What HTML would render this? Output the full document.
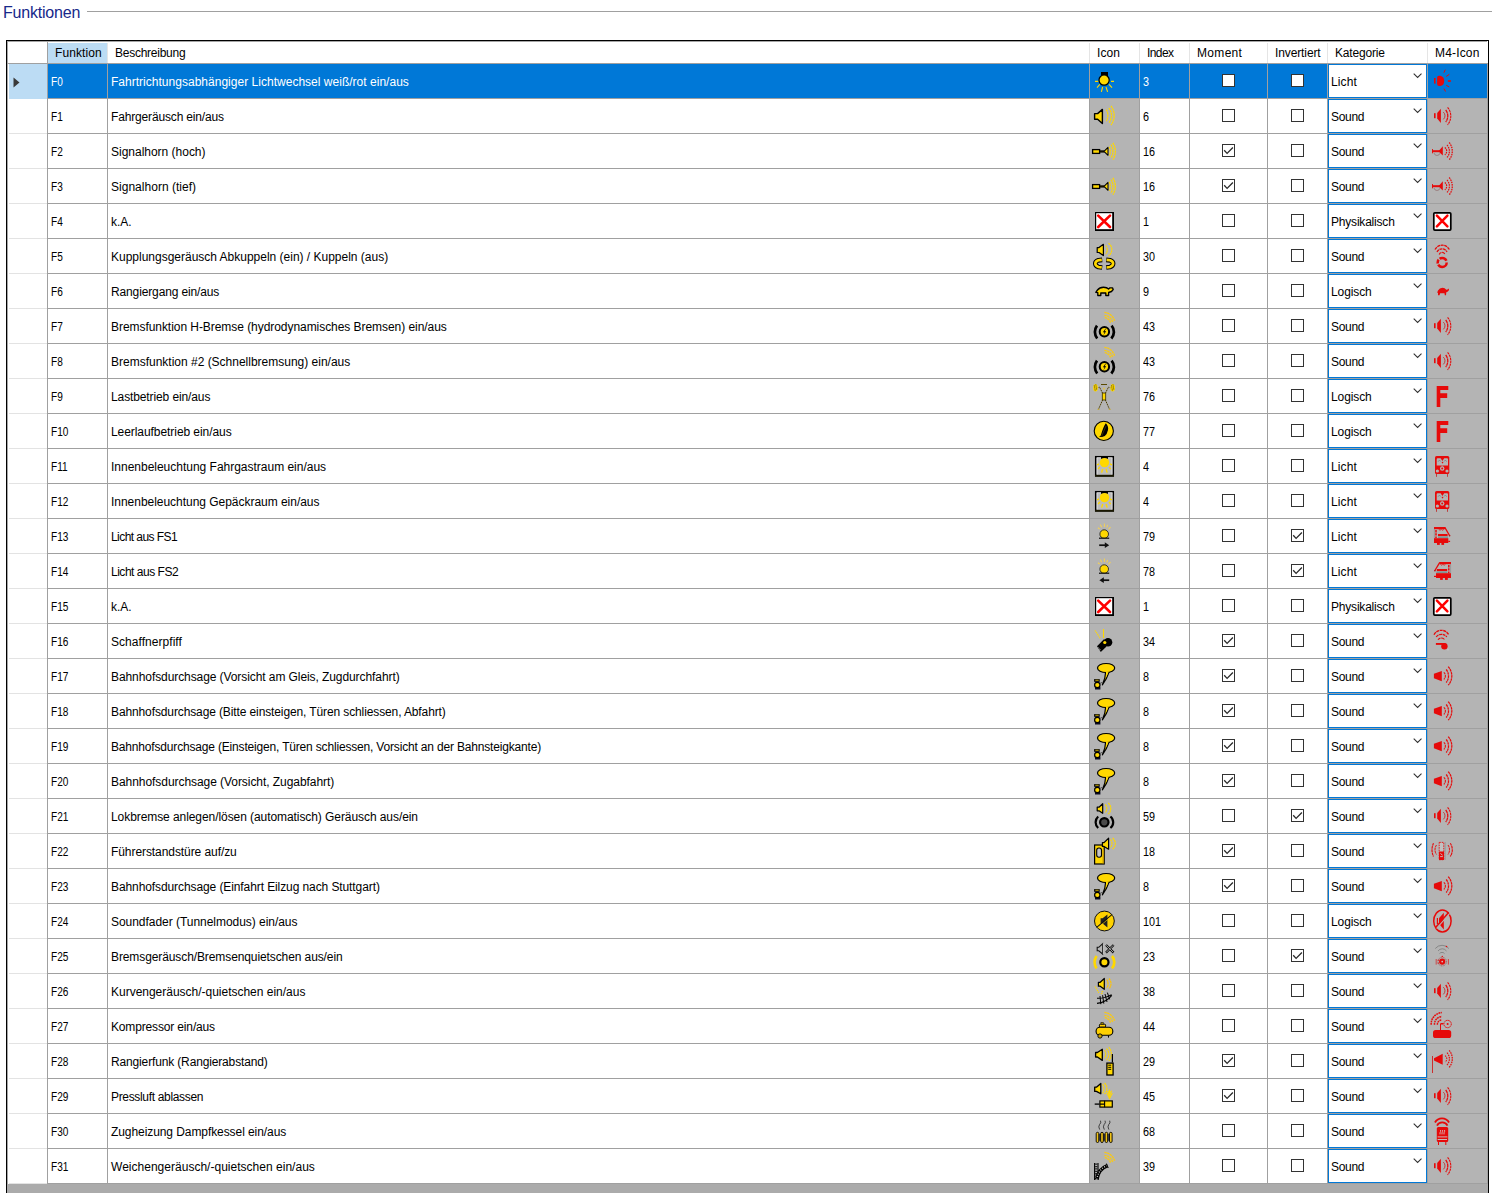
<!DOCTYPE html><html><head><meta charset="utf-8"><title>Funktionen</title><style>
html,body{margin:0;padding:0;background:#fff;}
body{width:1492px;height:1193px;position:relative;overflow:hidden;font-family:"Liberation Sans",sans-serif;font-size:12px;color:#000;}
.a{position:absolute;}
.t{position:absolute;white-space:nowrap;line-height:14px;height:14px;}
#title{left:3px;top:4px;font-size:16px;line-height:18px;height:18px;color:#17288a;white-space:nowrap;}
#tline{left:87px;top:11px;width:1405px;height:1px;background:#a0a0a0;}
#grid{left:6px;top:40px;width:1481px;height:1160px;border:1px solid #000;background:#ababab;}
#body{left:7px;top:41px;width:1481px;height:1143px;background:#fff;}
.hl{position:absolute;height:1px;background:#a0a0a0;left:47px;width:1441px;}
.rl{position:absolute;height:1px;background:#e3e3e3;left:9px;width:38px;}
.vl{position:absolute;width:1px;background:#a0a0a0;top:64px;height:1120px;}
.hv{position:absolute;width:1px;background:#e5e5e5;top:43px;height:20px;}
.g{position:absolute;background:#b4b4b4;height:34px;}
.sel{position:absolute;background:#0078d7;height:34px;top:64px;}
.cb{position:absolute;width:11px;height:11px;border:1px solid #333;background:#fff;}
.cb svg{position:absolute;left:-1px;top:-1px;}
.co{position:absolute;left:1328px;width:97px;height:32px;border:1px solid #0078d7;background:#fff;}
.ic{position:absolute;width:48px;height:34px;overflow:visible;}
.w{color:#fff;}
.n{transform:scaleX(.84);transform-origin:0 0;}
.m{transform:scaleX(.9);transform-origin:0 0;}
</style></head><body>
<svg width="0" height="0" style="position:absolute"><defs><symbol id="sun" viewBox="0 0 48 34" overflow="visible"><rect x="11" y="8" width="7" height="4" fill="#000"/><circle cx="14.1" cy="16.1" r="5.1" fill="#ffd800" stroke="#000" stroke-width="1.2"/><path d="M5 17.4H8.2M21 17.4H24M9.8 20.4L7 23.6M19 20.4L22 23.6M12.6 23L11.4 27.9M16 23L17.6 27.9" fill="none" stroke="#ffd800" stroke-width="1.1" /></symbol><symbol id="speaker" viewBox="0 0 48 34" overflow="visible"><path d="M4.6 14.6L7.6 14.6L12.4 10.4L12.4 24.6L7.6 20.2L4.6 20.2Z" fill="#ffd800" stroke="#000" stroke-width="1.4" stroke-linejoin="round"/><path d="M16.30 10.70A10.95 10.95 0 0 1 16.30 22.10" fill="none" stroke="#ffd800" stroke-width="1.25" stroke-dasharray="2.2 0.5"/><path d="M18.80 9.00A11.77 11.77 0 0 1 18.80 24.00" fill="none" stroke="#ffd800" stroke-width="1.25" stroke-dasharray="2.2 0.5"/><path d="M21.00 7.00A15.70 15.70 0 0 1 21.00 26.00" fill="none" stroke="#ffd800" stroke-width="1.25" stroke-dasharray="2.2 0.5"/></symbol><symbol id="horn" viewBox="0 0 48 34" overflow="visible"><rect x="2.6" y="15.6" width="7" height="3.8" fill="#ffd800" stroke="#000" stroke-width="1.3"/><rect x="10" y="16.3" width="4.6" height="2.3" fill="#141000"/><path d="M14 17.3L18 13.3L18 21.3Z" fill="#ffd800" stroke="#000" stroke-width="1.05" stroke-linejoin="round"/><path d="M19.20 12.80A9.35 9.35 0 0 1 19.20 21.60" fill="none" stroke="#ffd800" stroke-width="1.25" stroke-dasharray="2.2 0.5"/><path d="M21.00 10.60A12.76 12.76 0 0 1 21.00 24.00" fill="none" stroke="#ffd800" stroke-width="1.25" stroke-dasharray="2.2 0.5"/><path d="M22.90 8.90A15.36 15.36 0 0 1 22.90 25.70" fill="none" stroke="#ffd800" stroke-width="1.25" stroke-dasharray="2.2 0.5"/></symbol><symbol id="x" viewBox="0 0 48 34" overflow="visible"><rect x="5" y="8" width="19" height="19" fill="#000"/><rect x="6.2" y="9.2" width="16" height="16" fill="#fff"/><path d="M8.2 11.6L20 23M20 11.6L8.2 23" fill="none" stroke="#ff0000" stroke-width="2.6" stroke-linecap="round"/></symbol><symbol id="couple" viewBox="0 0 48 34" overflow="visible"><path d="M7.2 8.6L9 8.6L13.4 5.3L13.4 16.6L9 13.5L7.2 13.5Z" fill="#ffd800" stroke="#000" stroke-width="1.2" stroke-linejoin="round"/><path d="M15.80 6.50A6.77 6.77 0 0 1 15.80 15.00" fill="none" stroke="#ffd800" stroke-width="1.15" stroke-dasharray="2.2 0.5"/><path d="M18.50 4.30A7.76 7.76 0 0 1 18.50 17.00" fill="none" stroke="#ffd800" stroke-width="1.15" stroke-dasharray="2.2 0.5"/><path d="M12.2 20.9L8.4 21.3Q5.3 22.4 5.3 24.6Q5.3 26.9 8.4 28L12.2 28.5" fill="none" stroke="#000" stroke-width="4.7" stroke-linejoin="round"/><path d="M11.8 20.9L8.4 21.3Q5.3 22.4 5.3 24.6Q5.3 26.9 8.4 28L11.8 28.5" fill="none" stroke="#ffd800" stroke-width="2.6" /><path d="M16.2 20.9L20 21.3Q23.1 22.4 23.1 24.6Q23.1 26.9 20 28L16.2 28.5" fill="none" stroke="#000" stroke-width="4.7" stroke-linejoin="round"/><path d="M16.6 20.9L20 21.3Q23.1 22.4 23.1 24.6Q23.1 26.9 20 28L16.6 28.5" fill="none" stroke="#ffd800" stroke-width="2.6" /></symbol><symbol id="turtle" viewBox="0 0 48 34" overflow="visible"><path d="M5.8 18.3L7.5 16Q9.5 13.2 13.5 13.2Q17 13.2 18.6 15L20 13.8L22.5 13.8L23.2 15.5L21.5 17.5L18.6 18.5L18.6 21.5L15.8 21.5L15.8 19L10.8 19L10.8 21.5L7.8 21.5L7.8 18.6Z" fill="#ffd800" stroke="#000" stroke-width="1.35" stroke-linejoin="round"/></symbol><symbol id="brake" viewBox="0 0 48 34" overflow="visible"><path d="M14.40 3.40A11.46 11.46 0 0 1 24.60 11.90" fill="none" stroke="#f9c916" stroke-width="1.3499999999999999" stroke-dasharray="2.4 0.5"/><path d="M14.40 6.30A9.36 9.36 0 0 1 22.60 13.00" fill="none" stroke="#f9c916" stroke-width="1.3499999999999999" stroke-dasharray="2.4 0.5"/><path d="M14.70 8.70A6.41 6.41 0 0 1 20.50 13.70" fill="none" stroke="#f9c916" stroke-width="1.3499999999999999" stroke-dasharray="2.4 0.5"/><path d="M7.00 16.60A10.56 10.56 0 0 0 7.20 29.50" fill="none" stroke="#000" stroke-width="2.7" /><path d="M21.60 16.60A9.72 9.72 0 0 1 21.30 29.50" fill="none" stroke="#000" stroke-width="2.7" /><circle cx="14.4" cy="22.8" r="4.7" fill="#ffd800" stroke="#000" stroke-width="2"/><path d="M15.3 19.8L12.9 23.3L14.5 23.3L13.4 26.2L16.2 22.2L14.6 22.2L15.9 19.8Z" fill="#000" /></symbol><symbol id="mast" viewBox="0 0 48 34" overflow="visible"><path d="M11 5.5H17" fill="none" stroke="#5a4a00" stroke-width="1" /><circle cx="14" cy="9.6" r="1.2" fill="#d8c060"/><rect x="12.3" y="14" width="3.4" height="7" fill="#ffd800" stroke="#3a3000" stroke-width="0.8"/><path d="M12.5 14L9.6 8.2L7.5 8.8M15.5 14L18.4 8.2L20.5 8.8M12.6 21L8.6 30M15.4 21L19.4 30" fill="none" stroke="#4a3c00" stroke-width="1" stroke-dasharray="1.4 0.6"/><ellipse cx="5.5" cy="8.8" rx="2.3" ry="3.8" fill="#ffd800"/><ellipse cx="22.7" cy="8.8" rx="2.3" ry="3.8" fill="#ffd800"/><path d="M4.3 6.5L5.2 11.5M5.8 5.5L6.7 11M21.5 6.5L22.4 11.5M23 5.5L23.9 11" fill="none" stroke="#000" stroke-width="0.7" stroke-dasharray="1 1"/><path d="M7.6 30.3H9.4M18.8 30.3H20.6" fill="none" stroke="#c8a820" stroke-width="1" /></symbol><symbol id="gauge" viewBox="0 0 48 34" overflow="visible"><circle cx="13.8" cy="16.9" r="9.6" fill="#ffd800" stroke="#000" stroke-width="1.1"/><path d="M15.8 9.3Q18.8 12.5 18 16Q17.2 20 14.8 22L12 23L9 22.8L10.8 21.5Q12 17 13.5 13.5Q14.5 11 15.8 9.3Z" fill="#000" /><path d="M11.5 22.3L16 12" fill="none" stroke="#7a6800" stroke-width="0.5" /></symbol><symbol id="interior" viewBox="0 0 48 34" overflow="visible"><rect x="5.7" y="7.7" width="17.6" height="19.2" fill="#bcbcbc" stroke="#000" stroke-width="1.5"/><rect x="5" y="25.8" width="19" height="1.8" fill="#1a1800"/><path d="M7.2 9V25.4M21.9 9V25.4M6.8 8.8H11M18 8.8H22.4" fill="none" stroke="#dcdcdc" stroke-width="0.9" /><rect x="11" y="7" width="7" height="2.8" fill="#000"/><circle cx="14.5" cy="13.6" r="4.7" fill="#ffd800"/><path d="M7 15.8L9 15M22 15.8L20 15M8.2 20.2L9.8 17.8M20.6 20.2L19 17.8M11.6 23.6L12.7 20M17.2 23.6L16 20" fill="none" stroke="#ffd800" stroke-width="1.4" /></symbol><symbol id="lampR" viewBox="0 0 48 34" overflow="visible"><path d="M7.9 8.8L9.7 10M10.3 5.6L11.7 8.2M14.4 4.4V7.9M17.6 5.9L16.7 8.5M20.5 8.2L18.5 10.3" fill="none" stroke="#f0cf5a" stroke-width="1.1" /><circle cx="14.2" cy="15.1" r="4.3" fill="#ffd800" stroke="#222" stroke-width="0.9"/><rect x="9" y="18.6" width="10.2" height="1.3" fill="#111"/><rect x="9.6" y="19.9" width="9" height="1" fill="#b4b4b4"/><path d="M9.2 26.2H16" fill="none" stroke="#111" stroke-width="1.7" /><path d="M14.8 23.3L19.2 26.2L14.8 29.1Z" fill="#111" /></symbol><symbol id="lampL" viewBox="0 0 48 34" overflow="visible"><path d="M7.9 8.8L9.7 10M10.3 5.6L11.7 8.2M14.4 4.4V7.9M17.6 5.9L16.7 8.5M20.5 8.2L18.5 10.3" fill="none" stroke="#f0cf5a" stroke-width="1.1" /><circle cx="14.2" cy="15.1" r="4.3" fill="#ffd800" stroke="#222" stroke-width="0.9"/><rect x="9" y="18.6" width="10.2" height="1.3" fill="#111"/><rect x="9.6" y="19.9" width="9" height="1" fill="#b4b4b4"/><path d="M12.5 26.2H19.2" fill="none" stroke="#111" stroke-width="1.7" /><path d="M13.8 23.3L9.4 26.2L13.8 29.1Z" fill="#111" /></symbol><symbol id="whistle" viewBox="0 0 48 34" overflow="visible"><path d="M13.5 5V14" fill="none" stroke="#ffd800" stroke-width="1.1" /><path d="M5 6.5L10.5 14.6" fill="none" stroke="#ffd800" stroke-width="1.2" stroke-dasharray="1.2 0.8"/><circle cx="18" cy="18.2" r="4.3" fill="#000"/><path d="M14.2 15L7 22.2L10.8 27.9L16.5 22.5Z" fill="#000" /><circle cx="14.8" cy="18.5" r="1.6" fill="#ffd800"/><path d="M8.6 23.6L10.8 26.6" fill="none" stroke="#ddd" stroke-width="0.9" stroke-dasharray="1 0.8"/></symbol><symbol id="announce" viewBox="0 0 48 34" overflow="visible"><path d="M15.6 13.2L19.2 12.8Q16.5 20.6 12.4 25.8Q15.5 19 15.6 13.2Z" fill="#ffd800" stroke="#000" stroke-width="1.2" stroke-linejoin="round"/><ellipse cx="16.1" cy="9" rx="8.6" ry="4.5" fill="#ffd800" stroke="#000" stroke-width="1.2"/><path d="M16 12.8L18.8 12.6L16 18.5Z" fill="#ffd800" /><rect x="4.1" y="20.1" width="5.6" height="2.7" fill="#000"/><rect x="5.3" y="20.8" width="3.4" height="0.8" fill="#ffd800"/><rect x="5.4" y="22.6" width="3.8" height="1.6" fill="#111"/><rect x="5" y="28" width="5.4" height="2.5" fill="#0a0a20"/><circle cx="7.3" cy="26" r="2.7" fill="#ffd800" stroke="#000" stroke-width="1.2"/><path d="M10.2 24.2L12.2 23.4" fill="none" stroke="#444" stroke-width="0.9" /></symbol><symbol id="brake2" viewBox="0 0 48 34" overflow="visible"><path d="M7.2 8.2L9 8.2L12.7 4.7L12.7 14.3L9 11.8L7.2 11.8Z" fill="#ffd800" stroke="#000" stroke-width="1.2" stroke-linejoin="round"/><path d="M15.30 5.50A6.08 6.08 0 0 1 15.30 13.50" fill="none" stroke="#ffd800" stroke-width="1.15" stroke-dasharray="2.2 0.5"/><path d="M18.20 4.00A7.12 7.12 0 0 1 18.20 15.00" fill="none" stroke="#ffd800" stroke-width="1.15" stroke-dasharray="2.2 0.5"/><path d="M8.20 17.50A7.66 7.66 0 0 0 8.20 29.00" fill="none" stroke="#000" stroke-width="2.2" /><path d="M20.40 17.50A7.30 7.30 0 0 1 20.40 29.00" fill="none" stroke="#000" stroke-width="2.2" /><circle cx="14.3" cy="23.3" r="4.2" fill="#4a4a4a" stroke="#000" stroke-width="2.2"/></symbol><symbol id="door" viewBox="0 0 48 34" overflow="visible"><rect x="4.6" y="11" width="9.6" height="19" fill="#ffd800" stroke="#000" stroke-width="1.2"/><rect x="12.6" y="15.5" width="1.2" height="14" fill="#c89a00"/><rect x="6.7" y="14" width="4.8" height="9.2" rx="2.2" fill="#c4c4c4" stroke="#000" stroke-width="1.1"/><path d="M12.4 8.6L14 8.6L18.6 4.2L18.6 15.2L14 12.4L12.4 12.4Z" fill="#ffd800" stroke="#000" stroke-width="1.2" stroke-linejoin="round"/><path d="M20.30 5.50A5.56 5.56 0 0 1 20.30 13.50" fill="none" stroke="#ffd800" stroke-width="1.15" stroke-dasharray="2.2 0.5"/><path d="M22.60 4.00A6.95 6.95 0 0 1 22.60 15.00" fill="none" stroke="#ffd800" stroke-width="1.15" stroke-dasharray="2.2 0.5"/></symbol><symbol id="fader" viewBox="0 0 48 34" overflow="visible"><circle cx="14.4" cy="17" r="9.9" fill="#ffd200" stroke="#111" stroke-width="1"/><path d="M10.6 14.2H12.6L17.4 10.6V23.4L12.6 19.6H10.6Z" fill="#222" /><path d="M6.7 23.4L22 10.6" fill="none" stroke="#111" stroke-width="1.2" /><path d="M7.6 24L22.6 11.4" fill="none" stroke="#ffd200" stroke-width="0.6" /></symbol><symbol id="brakesq" viewBox="0 0 48 34" overflow="visible"><path d="M7.2 8.3H8.8L12.6 4.8V15L8.8 11.8H7.2Z" fill="none" stroke="#111" stroke-width="1.1" /><path d="M13.3 4.5V15" fill="none" stroke="#d0d0d0" stroke-width="0.8" /><path d="M16 6L23.6 13.6M23.6 6L16 13.6" fill="none" stroke="#111" stroke-width="2.3" /><path d="M16.3 6.3L23.3 13.3M23.3 6.3L16.3 13.3" fill="none" stroke="#c0c0c0" stroke-width="0.8" /><path d="M6.60 17.00A10.61 10.61 0 0 0 6.60 29.40" fill="none" stroke="#ffd800" stroke-width="2.7" /><path d="M22.00 17.00A9.50 9.50 0 0 1 22.00 29.40" fill="none" stroke="#ffd800" stroke-width="2.7" /><circle cx="14.4" cy="23.2" r="4.1" fill="#ffd800" stroke="#000" stroke-width="2.2"/></symbol><symbol id="curve" viewBox="0 0 48 34" overflow="visible"><path d="M8.4 8.3L10.2 8.3L14.3 4.5L14.3 15.3L10.2 12.2L8.4 12.2Z" fill="#ffd800" stroke="#000" stroke-width="1.2" stroke-linejoin="round"/><path d="M16.80 5.50A8.10 8.10 0 0 1 16.80 14.00" fill="none" stroke="#ffc400" stroke-width="1.15" stroke-dasharray="2.2 0.5"/><path d="M19.00 4.50A7.63 7.63 0 0 1 19.00 14.80" fill="none" stroke="#ffc400" stroke-width="1.15" stroke-dasharray="2.2 0.5"/><path d="M5.2 12.5L8.8 18.8M12.6 17L11.4 20.6" fill="none" stroke="#ffd800" stroke-width="1.3" stroke-dasharray="1.2 0.8"/><path d="M7 24.3Q15 24.6 21.6 20.6M7 29.4Q16 28.6 21.8 21.4" fill="none" stroke="#000" stroke-width="1.1" /><path d="M10 22L10.8 30.2M12.6 21.2L13.8 29.6M15 20L17 28M17.4 18.6L19.6 25.4" fill="none" stroke="#000" stroke-width="1" /></symbol><symbol id="compressor" viewBox="0 0 48 34" overflow="visible"><path d="M14.40 3.40A11.46 11.46 0 0 1 24.60 11.90" fill="none" stroke="#f9c916" stroke-width="1.3499999999999999" stroke-dasharray="2.4 0.5"/><path d="M14.40 6.30A9.36 9.36 0 0 1 22.60 13.00" fill="none" stroke="#f9c916" stroke-width="1.3499999999999999" stroke-dasharray="2.4 0.5"/><path d="M14.70 8.70A6.41 6.41 0 0 1 20.50 13.70" fill="none" stroke="#f9c916" stroke-width="1.3499999999999999" stroke-dasharray="2.4 0.5"/><rect x="11" y="13.4" width="2.2" height="2" fill="#ffd800" stroke="#222" stroke-width="0.7"/><rect x="9.4" y="15.2" width="6.2" height="3" rx="1" fill="#ffd000" stroke="#000" stroke-width="1"/><path d="M18.5 26.3V28.6" fill="none" stroke="#000" stroke-width="1.1" /><rect x="6.1" y="18.2" width="16.7" height="8" rx="3.8" fill="#ffd000" stroke="#000" stroke-width="1.1"/><circle cx="10" cy="27" r="2.1" fill="#ffd000" stroke="#000" stroke-width="1"/><circle cx="10" cy="27" r="0.8" fill="none" stroke="#806800" stroke-width="0.5"/></symbol><symbol id="radio" viewBox="0 0 48 34" overflow="visible"><path d="M5.6 8.5L7.4 8.5L12.3 5.3L12.3 16.4L7.4 13L5.6 13Z" fill="#ffd800" stroke="#000" stroke-width="1.3" stroke-linejoin="round"/><path d="M14.30 6.00A6.77 6.77 0 0 1 14.30 14.50" fill="none" stroke="#ffd800" stroke-width="1.15" stroke-dasharray="2.2 0.5"/><path d="M16.50 4.50A8.34 8.34 0 0 1 16.50 16.00" fill="none" stroke="#ffd800" stroke-width="1.15" stroke-dasharray="2.2 0.5"/><path d="M18.80 3.00A11.05 11.05 0 0 1 18.80 17.00" fill="none" stroke="#ffd800" stroke-width="1.15" stroke-dasharray="2.2 0.5"/><path d="M22.4 10V18.6" fill="none" stroke="#000" stroke-width="1.2" /><rect x="16.9" y="19.1" width="6.2" height="11.9" fill="#ffd800" stroke="#000" stroke-width="1.3"/><path d="M18.2 21.2H21.2M18.2 23.3H21.2M18.2 25.3H21.2" fill="none" stroke="#000" stroke-width="1" /></symbol><symbol id="air" viewBox="0 0 48 34" overflow="visible"><path d="M4.7 8.2L6.4 8.2L10.8 4.4L10.8 14.8L6.4 12.4L4.7 12.4Z" fill="#ffd800" stroke="#000" stroke-width="1.3" stroke-linejoin="round"/><path d="M12.60 5.00A8.25 8.25 0 0 1 12.60 14.20" fill="none" stroke="#ffd800" stroke-width="1.15" stroke-dasharray="2.2 0.5"/><path d="M14.60 4.00A7.50 7.50 0 0 1 14.60 15.00" fill="none" stroke="#ffd800" stroke-width="1.15" stroke-dasharray="2.2 0.5"/><path d="M19.5 10.5V19.2M17 14L19.5 19.4L22.4 14M17.8 11.8L19.5 16.5L21.6 11.8" fill="none" stroke="#ffd800" stroke-width="1.1" /><path d="M4.7 25.1H9.4" fill="none" stroke="#000" stroke-width="1.3" /><rect x="9.9" y="21.9" width="12.4" height="6.2" fill="#ffd800" stroke="#000" stroke-width="1.2"/><path d="M14.6 21.8V28.2M9.8 25.1H14.6" fill="none" stroke="#000" stroke-width="1.1" /></symbol><symbol id="heat" viewBox="0 0 48 34" overflow="visible"><path d="M10.5 6.7Q11.5 9 9.5 10.6Q8 12.6 9.7 15.6" fill="none" stroke="#222" stroke-width="0.8" /><path d="M15.1 6.7Q16.1 9 14.1 10.6Q12.6 12.6 14.299999999999999 15.6" fill="none" stroke="#222" stroke-width="0.8" /><path d="M19.7 6.7Q20.7 9 18.7 10.6Q17.2 12.6 18.9 15.6" fill="none" stroke="#222" stroke-width="0.8" /><rect x="7" y="19.8" width="14.5" height="7" fill="#3d4458"/><rect x="6.2" y="18.3" width="2.6" height="10.2" rx="1.3" fill="#f2c418" stroke="#000" stroke-width="0.9"/><rect x="10.7" y="18.3" width="2.6" height="10.2" rx="1.3" fill="#f2c418" stroke="#000" stroke-width="0.9"/><rect x="15.099999999999998" y="18.3" width="2.6" height="10.2" rx="1.3" fill="#f2c418" stroke="#000" stroke-width="0.9"/><rect x="19.5" y="18.3" width="2.6" height="10.2" rx="1.3" fill="#f2c418" stroke="#000" stroke-width="0.9"/></symbol><symbol id="switch" viewBox="0 0 48 34" overflow="visible"><path d="M14.40 3.40A11.46 11.46 0 0 1 24.60 11.90" fill="none" stroke="#f9c916" stroke-width="1.3499999999999999" stroke-dasharray="2.4 0.5"/><path d="M14.40 6.30A9.36 9.36 0 0 1 22.60 13.00" fill="none" stroke="#f9c916" stroke-width="1.3499999999999999" stroke-dasharray="2.4 0.5"/><path d="M14.70 8.70A6.41 6.41 0 0 1 20.50 13.70" fill="none" stroke="#f9c916" stroke-width="1.3499999999999999" stroke-dasharray="2.4 0.5"/><path d="M4.6 14V31M8 14V31" fill="none" stroke="#000" stroke-width="1.1" /><path d="M6.3 14.5V31" fill="none" stroke="#222" stroke-width="2.4" stroke-dasharray="1.3 1.1"/><path d="M6.8 30.6Q8.2 20 17.4 16.6" fill="none" stroke="#000" stroke-width="3.6" /><path d="M6.8 30.6Q8.2 20 17.4 16.6" fill="none" stroke="#ddd" stroke-width="1.3" stroke-dasharray="0.9 1.6"/><path d="M16.5 14.6L18.2 19" fill="none" stroke="#000" stroke-width="1" /></symbol><symbol id="m4light" viewBox="0 0 48 34" overflow="visible"><rect x="6" y="14" width="1.6" height="5.6" fill="#e60a0a"/><path d="M9.1 13.8Q9.1 11.8 11 11.8L12.3 11.8Q16.2 12.6 16.2 17Q16.2 21.4 12.3 22L11 22Q9.1 22 9.1 20Z" fill="#e60a0a" /><path d="M15.9 8.7L17.3 5.7M18.2 12.5L21.3 10.3M18.2 21.3L21.3 23M16 24.6L17.5 27.5" fill="none" stroke="#e60a0a" stroke-width="1.0" /><path d="M19.8 17H22.9" fill="none" stroke="#e60a0a" stroke-width="1.6" /></symbol><symbol id="m4sound" viewBox="0 0 48 34" overflow="visible"><rect x="6" y="14.2" width="1.6" height="5" fill="#e60a0a"/><path d="M9.2 14L12.9 9.8V24L9.2 19.5Z" fill="#e60a0a" /><path d="M15.30 13.10A4.77 4.77 0 0 1 15.30 20.40" fill="none" stroke="#c03030" stroke-width="0.9" /><path d="M17.70 11.00A9.61 9.61 0 0 1 17.70 23.00" fill="none" stroke="#e60a0a" stroke-width="1.276" stroke-dasharray="3.4 0.45"/><path d="M19.60 8.30A13.56 13.56 0 0 1 19.60 25.80" fill="none" stroke="#e60a0a" stroke-width="1.056" stroke-dasharray="2.4 0.6"/></symbol><symbol id="m4horn" viewBox="0 0 48 34" overflow="visible"><rect x="4" y="16.2" width="8.5" height="2" fill="#e60a0a"/><rect x="4" y="15" width="0.9" height="4.3" fill="#e60a0a"/><path d="M10.5 17.2L14.8 12.3V21.5Z" fill="#e60a0a" /><path d="M6.00 19.00A3.08 3.08 0 0 0 12.00 19.20" fill="none" stroke="#804848" stroke-width="0.6" opacity="0.8"/><path d="M16.80 13.50A4.45 4.45 0 0 1 16.80 20.80" fill="none" stroke="#e60a0a" stroke-width="1.1440000000000001" stroke-dasharray="1.6 0.8"/><path d="M19.00 11.00A9.33 9.33 0 0 1 19.00 23.50" fill="none" stroke="#e60a0a" stroke-width="1.1440000000000001" stroke-dasharray="1.6 0.8"/><path d="M21.20 8.50A13.62 13.62 0 0 1 21.20 25.80" fill="none" stroke="#e60a0a" stroke-width="1.232" stroke-dasharray="1.6 0.8"/></symbol><symbol id="m4x" viewBox="0 0 48 34" overflow="visible"><rect x="5.8" y="8.8" width="17" height="17.3" rx="1" fill="#fff" stroke="#000" stroke-width="1.7"/><path d="M8.9 11.7L19.4 22.3M19.4 11.7L8.9 22.3" fill="none" stroke="#ff0000" stroke-width="2.5" stroke-linecap="round"/></symbol><symbol id="m4couple" viewBox="0 0 48 34" overflow="visible"><path d="M7.00 10.50A8.09 8.09 0 0 1 21.30 10.50" fill="none" stroke="#e60a0a" stroke-width="1.32" stroke-dasharray="3 0.6"/><path d="M9.00 13.00A5.51 5.51 0 0 1 19.00 13.00" fill="none" stroke="#e60a0a" stroke-width="1.232" stroke-dasharray="3 0.6"/><path d="M11.20 15.50A3.05 3.05 0 0 1 17.00 15.50" fill="none" stroke="#e60a0a" stroke-width="1.1440000000000001" stroke-dasharray="3 0.6"/><circle cx="14.2" cy="23.4" r="4.5" fill="none" stroke="#e60a0a" stroke-width="2.5" stroke-dasharray="11.5 1.2 4 1.2 8 2.3"/></symbol><symbol id="m4turtle" viewBox="0 0 48 34" overflow="visible"><path d="M9.2 18.6L10 16.5Q11.5 13.7 14.5 13.7Q17 13.7 18.3 15.8L19.5 15.5L21 14.5L20.8 16.5L19.5 17.8L18.3 18.3L18 21.2L16.8 21.2L16.5 19.2L12.2 19.2L11.5 21.2L10 21.2L10 19Z" fill="#e60a0a" /></symbol><symbol id="m4F" viewBox="0 0 48 34" overflow="visible"><path d="M8.7 7H20.3V11H12.3V14.2H19.2V18.9H12.3V28H8.7Z" fill="#e60a0a" /></symbol><symbol id="m4train" viewBox="0 0 48 34" overflow="visible"><rect x="7" y="7" width="14.3" height="18" rx="1.6" fill="#e60a0a"/><path d="M8.7 10.2Q8.7 9.2 9.7 9.2L12.6 9.2L14.4 12L16.2 9.2L19 9.2Q20 9.2 20 10.2V16.6H8.7Z" fill="#b4b4b4" /><circle cx="14.5" cy="13.6" r="0.8" fill="#e60a0a"/><path d="M10 12.8L11.5 11L12.8 12.6M16 12.6L17.3 11L18.8 12.8" fill="none" stroke="#666" stroke-width="0.5" /><circle cx="9.4" cy="22" r="1.6" fill="#b4b4b4"/><circle cx="19" cy="22" r="1.6" fill="#b4b4b4"/><circle cx="14.2" cy="19.5" r="2.2" fill="#b4b4b4"/><circle cx="14.2" cy="19.5" r="1" fill="#e60a0a"/><path d="M14.2 16.6V17.6" fill="none" stroke="#b4b4b4" stroke-width="0.8" /><path d="M8.5 25V27.8M19.5 25V27.8" fill="none" stroke="#c02020" stroke-width="0.8" /></symbol><symbol id="m4loco1" viewBox="0 0 48 34" overflow="visible"><rect x="6" y="8" width="11.2" height="2.2" fill="#e60a0a"/><path d="M16.8 8.4L21.8 17" fill="none" stroke="#e60a0a" stroke-width="1.3" /><path d="M6.4 10.2V19.2" fill="none" stroke="#888" stroke-width="0.6" /><path d="M8 11V19" fill="none" stroke="#e60a0a" stroke-width="1.5" stroke-dasharray="2.4 0.8"/><path d="M11 10.2L12 11.4L13 10.2M13.6 10.2L14.6 11.4L15.6 10.2" fill="none" stroke="#e60a0a" stroke-width="0.8" /><rect x="10" y="15" width="9.6" height="2.1" fill="#e60a0a"/><rect x="10" y="17.4" width="10" height="1.6" fill="#7f9595"/><rect x="6" y="19.2" width="14.3" height="4.8" fill="#e60a0a"/><rect x="20.3" y="21.8" width="1.8" height="1.2" fill="#e60a0a"/><rect x="9" y="24" width="2.8" height="1.9" fill="#e60a0a"/><rect x="13.4" y="24" width="2.7" height="1.9" fill="#e60a0a"/><circle cx="21.6" cy="16.8" r="0.8" fill="#a02020"/></symbol><symbol id="m4loco2" viewBox="0 0 48 34" overflow="visible"><rect x="11.5" y="8" width="11.5" height="2.2" fill="#e60a0a"/><path d="M11.8 8.4L6.6 17" fill="none" stroke="#e60a0a" stroke-width="1.3" /><path d="M22.6 10.2V19.2" fill="none" stroke="#888" stroke-width="0.6" /><path d="M20.8 11V19" fill="none" stroke="#e60a0a" stroke-width="1.5" stroke-dasharray="2.4 0.8"/><path d="M12.6 10.2L13.6 11.4L14.6 10.2M15.2 10.2L16.2 11.4L17.2 10.2" fill="none" stroke="#e60a0a" stroke-width="0.8" /><rect x="8.8" y="15" width="10.4" height="2.1" fill="#e60a0a"/><rect x="8.4" y="17.4" width="11" height="1.6" fill="#7f9595"/><rect x="8" y="19.2" width="15" height="4.8" fill="#e60a0a"/><rect x="6" y="21.8" width="2" height="1.2" fill="#e60a0a"/><rect x="12.1" y="24" width="2.7" height="1.9" fill="#e60a0a"/><rect x="17" y="24" width="2.8" height="1.9" fill="#e60a0a"/><circle cx="6.9" cy="16.8" r="0.8" fill="#a02020"/></symbol><symbol id="m4whistle" viewBox="0 0 48 34" overflow="visible"><path d="M6.00 10.70A8.34 8.34 0 0 1 20.70 10.70" fill="none" stroke="#e60a0a" stroke-width="1.32" stroke-dasharray="3 0.6"/><path d="M8.20 13.00A6.55 6.55 0 0 1 18.80 13.00" fill="none" stroke="#e60a0a" stroke-width="1.232" stroke-dasharray="3 0.6"/><path d="M10.00 15.80A4.02 4.02 0 0 1 16.70 15.80" fill="none" stroke="#e60a0a" stroke-width="1.1440000000000001" stroke-dasharray="3 0.6"/><rect x="7.9" y="19" width="9.6" height="1.9" fill="#e60a0a"/><circle cx="16.4" cy="22.3" r="3.2" fill="#e60a0a"/><rect x="19.4" y="24.8" width="1.2" height="1.6" fill="#c8c8c8"/></symbol><symbol id="m4spk" viewBox="0 0 48 34" overflow="visible"><path d="M5.9 14.8L13.8 12V22.2L5.9 19.3Z" fill="#e60a0a" /><path d="M15.80 13.30A4.62 4.62 0 0 1 15.80 20.30" fill="none" stroke="#e60a0a" stroke-width="1.056" stroke-dasharray="2.6 0.5"/><path d="M18.20 10.50A10.33 10.33 0 0 1 18.20 23.50" fill="none" stroke="#e60a0a" stroke-width="1.232" stroke-dasharray="2.6 0.5"/><path d="M20.20 7.70A13.68 13.68 0 0 1 20.20 26.20" fill="none" stroke="#e60a0a" stroke-width="1.232" stroke-dasharray="2.6 0.5"/></symbol><symbol id="m4door" viewBox="0 0 48 34" overflow="visible"><rect x="11.2" y="8.4" width="4.6" height="17.3" fill="#c2c2c2" stroke="#e60a0a" stroke-width="0.9" stroke-dasharray="1.6 0.9"/><rect x="11" y="17.5" width="5" height="8.5" fill="#e60a0a"/><path d="M12.4 19.5L14.6 21.2M12.2 22.6H14.8" fill="none" stroke="#c8c8c8" stroke-width="0.9" /><path d="M17.2 8V26" fill="none" stroke="#909090" stroke-width="0.7" /><path d="M8.50 11.00A8.25 8.25 0 0 0 8.50 20.50" fill="none" stroke="#e60a0a" stroke-width="0.9680000000000001" stroke-dasharray="2.6 0.5"/><path d="M5.50 9.30A15.27 15.27 0 0 0 5.50 22.50" fill="none" stroke="#e60a0a" stroke-width="1.1440000000000001" stroke-dasharray="2.6 0.5"/><path d="M20.00 11.00A8.25 8.25 0 0 1 20.00 20.50" fill="none" stroke="#e60a0a" stroke-width="0.9680000000000001" stroke-dasharray="2.6 0.5"/><path d="M22.30 9.30A11.89 11.89 0 0 1 22.30 22.50" fill="none" stroke="#e60a0a" stroke-width="1.1440000000000001" stroke-dasharray="2.6 0.5"/></symbol><symbol id="m4mute" viewBox="0 0 48 34" overflow="visible"><ellipse cx="14.4" cy="17" rx="8.7" ry="11" fill="none" stroke="#e60a0a" stroke-width="1.5"/><rect x="8.8" y="14" width="1.2" height="6" fill="#e60a0a"/><path d="M11 14.2L15.8 8.8V25.4L11 19.8Z" fill="#e60a0a" /><path d="M8.6 24.4L21.6 9.4" fill="none" stroke="#b4b4b4" stroke-width="1.3" /><path d="M7.6 23.4L20.6 8.6" fill="none" stroke="#e60a0a" stroke-width="1.5" /></symbol><symbol id="m4brakesq" viewBox="0 0 48 34" overflow="visible"><path d="M7.30 9.50A8.72 8.72 0 0 1 20.80 9.50" fill="none" stroke="#666" stroke-width="0.6" /><path d="M10.00 12.00A5.20 5.20 0 0 1 18.50 12.00" fill="none" stroke="#666" stroke-width="0.6" /><path d="M11.50 14.60A3.20 3.20 0 0 1 16.50 14.60" fill="none" stroke="#666" stroke-width="0.6" /><circle cx="18.5" cy="7.5" r="0.8" fill="#e60a0a"/><circle cx="14.3" cy="17.4" r="0.7" fill="#e60a0a"/><circle cx="10.3" cy="21.2" r="0.6" fill="#e60a0a"/><circle cx="10.3" cy="24.2" r="0.6" fill="#e60a0a"/><circle cx="14.2" cy="22.6" r="4.3" fill="none" stroke="#a04848" stroke-width="0.8" stroke-dasharray="1 0.7"/><circle cx="14.2" cy="22.6" r="2" fill="#c8c8c8" stroke="#e60a0a" stroke-width="2.3"/><path d="M8.2 20V25.6M20.4 20V25.6" fill="none" stroke="#d03030" stroke-width="0.8" /></symbol><symbol id="m4compressor" viewBox="0 0 48 34" overflow="visible"><path d="M3.20 15.80A11.34 11.34 0 0 1 13.80 3.60" fill="none" stroke="#e60a0a" stroke-width="1.496" stroke-dasharray="1.8 0.6"/><path d="M6.50 15.80A7.56 7.56 0 0 1 13.80 7.60" fill="none" stroke="#e60a0a" stroke-width="1.496" stroke-dasharray="1.8 0.6"/><path d="M9.40 15.80A4.47 4.47 0 0 1 13.80 10.90" fill="none" stroke="#e60a0a" stroke-width="1.4080000000000001" stroke-dasharray="1.8 0.6"/><rect x="12" y="14.5" width="1" height="6.6" fill="#e60a0a"/><rect x="12.6" y="14" width="3" height="1.6" rx="0.8" fill="#e60a0a"/><circle cx="19.6" cy="15" r="3.7" fill="none" stroke="#e60a0a" stroke-width="1" stroke-dasharray="1.6 0.6"/><circle cx="19.6" cy="15" r="1" fill="#e60a0a"/><rect x="5" y="21" width="18.2" height="8" rx="2.6" fill="#e60a0a"/></symbol><symbol id="m4radio" viewBox="0 0 48 34" overflow="visible"><rect x="4" y="12" width="0.9" height="17" fill="#d02020"/><path d="M6 14.2L14.7 9.7V20.8L6 16.6Z" fill="#e60a0a" /><path d="M17.00 11.60A3.74 3.74 0 0 1 17.00 18.00" fill="none" stroke="#e60a0a" stroke-width="1.056" stroke-dasharray="1.6 0.8"/><path d="M19.00 8.70A9.08 9.08 0 0 1 19.00 21.00" fill="none" stroke="#e60a0a" stroke-width="1.1440000000000001" stroke-dasharray="1.6 0.8"/><path d="M21.20 6.30A13.20 13.20 0 0 1 21.20 23.30" fill="none" stroke="#e60a0a" stroke-width="1.232" stroke-dasharray="1.6 0.8"/></symbol><symbol id="m4heat" viewBox="0 0 48 34" overflow="visible"><path d="M7.00 8.50A8.03 8.03 0 0 1 21.00 8.50" fill="none" stroke="#e60a0a" stroke-width="1.9" /><path d="M9.00 11.60A5.83 5.83 0 0 1 19.50 11.60" fill="none" stroke="#e60a0a" stroke-width="1.7" /><rect x="8.8" y="13" width="11.4" height="15" rx="1.5" fill="#e60a0a"/><path d="M12.6 16V17.6L12 18.8V20.4M14.6 16V17.6L14 18.8V20.4M16.6 16V17.6L16 18.8V20.4" fill="none" stroke="#d4d4d4" stroke-width="0.8" /><path d="M9.6 22.9H19.4M9.6 25.5H19" fill="none" stroke="#c8c8c8" stroke-width="0.9" /><rect x="10" y="28" width="1" height="3" fill="#e60a0a"/><rect x="17.3" y="28" width="1" height="3" fill="#e60a0a"/></symbol></defs></svg>
<div id="title" class="a" style="letter-spacing:-0.200px;">Funktionen</div><div id="tline" class="a"></div>
<div id="grid" class="a"></div><div id="body" class="a"></div>
<div class="a" style="left:7px;top:41px;width:1480px;height:1px;background:#a6a6a6"></div><div class="a" style="left:7px;top:41px;width:1px;height:1143px;background:#a6a6a6"></div>
<div class="a" style="left:48px;top:43px;width:60px;height:20px;background:#bcdcf4"></div>
<span class="t" style="left:55px;top:46px;letter-spacing:0.086px;">Funktion</span>
<span class="t" style="left:115px;top:46px;letter-spacing:-0.255px;">Beschreibung</span>
<span class="t" style="left:1097px;top:46px;letter-spacing:0.067px;">Icon</span>
<span class="t" style="left:1147px;top:46px;letter-spacing:-0.600px;">Index</span>
<span class="t" style="left:1197px;top:46px;letter-spacing:0.320px;">Moment</span>
<span class="t" style="left:1275px;top:46px;letter-spacing:-0.111px;">Invertiert</span>
<span class="t" style="left:1335px;top:46px;letter-spacing:-0.175px;">Kategorie</span>
<span class="t" style="left:1435px;top:46px;letter-spacing:0.167px;">M4-Icon</span>
<div class="a" style="left:47px;top:42px;width:1px;height:21px;background:#a0a0a0"></div>
<div class="hv" style="left:107px"></div>
<div class="hv" style="left:1089px"></div>
<div class="hv" style="left:1139px"></div>
<div class="hv" style="left:1189px"></div>
<div class="hv" style="left:1267px"></div>
<div class="hv" style="left:1327px"></div>
<div class="hv" style="left:1427px"></div>
<div class="g" style="left:1090px;top:64px;width:49px;height:1120px"></div>
<div class="g" style="left:1428px;top:64px;width:59px;height:1120px"></div>
<div class="sel" style="left:48px;width:1439px"></div>
<div class="a" style="left:9px;top:64px;width:38px;height:35px;background:#bcdcf4;z-index:2"></div>
<svg class="a" style="left:13px;top:77px;z-index:3" width="8" height="12"><path d="M0.5 0.5 L6.5 5.5 L0.5 10.5 Z" fill="#3a3a3a"/></svg>
<div class="hl" style="top:63px"></div>
<div class="hl" style="top:98px"></div>
<div class="rl" style="top:98px"></div>
<div class="hl" style="top:133px"></div>
<div class="rl" style="top:133px"></div>
<div class="hl" style="top:168px"></div>
<div class="rl" style="top:168px"></div>
<div class="hl" style="top:203px"></div>
<div class="rl" style="top:203px"></div>
<div class="hl" style="top:238px"></div>
<div class="rl" style="top:238px"></div>
<div class="hl" style="top:273px"></div>
<div class="rl" style="top:273px"></div>
<div class="hl" style="top:308px"></div>
<div class="rl" style="top:308px"></div>
<div class="hl" style="top:343px"></div>
<div class="rl" style="top:343px"></div>
<div class="hl" style="top:378px"></div>
<div class="rl" style="top:378px"></div>
<div class="hl" style="top:413px"></div>
<div class="rl" style="top:413px"></div>
<div class="hl" style="top:448px"></div>
<div class="rl" style="top:448px"></div>
<div class="hl" style="top:483px"></div>
<div class="rl" style="top:483px"></div>
<div class="hl" style="top:518px"></div>
<div class="rl" style="top:518px"></div>
<div class="hl" style="top:553px"></div>
<div class="rl" style="top:553px"></div>
<div class="hl" style="top:588px"></div>
<div class="rl" style="top:588px"></div>
<div class="hl" style="top:623px"></div>
<div class="rl" style="top:623px"></div>
<div class="hl" style="top:658px"></div>
<div class="rl" style="top:658px"></div>
<div class="hl" style="top:693px"></div>
<div class="rl" style="top:693px"></div>
<div class="hl" style="top:728px"></div>
<div class="rl" style="top:728px"></div>
<div class="hl" style="top:763px"></div>
<div class="rl" style="top:763px"></div>
<div class="hl" style="top:798px"></div>
<div class="rl" style="top:798px"></div>
<div class="hl" style="top:833px"></div>
<div class="rl" style="top:833px"></div>
<div class="hl" style="top:868px"></div>
<div class="rl" style="top:868px"></div>
<div class="hl" style="top:903px"></div>
<div class="rl" style="top:903px"></div>
<div class="hl" style="top:938px"></div>
<div class="rl" style="top:938px"></div>
<div class="hl" style="top:973px"></div>
<div class="rl" style="top:973px"></div>
<div class="hl" style="top:1008px"></div>
<div class="rl" style="top:1008px"></div>
<div class="hl" style="top:1043px"></div>
<div class="rl" style="top:1043px"></div>
<div class="hl" style="top:1078px"></div>
<div class="rl" style="top:1078px"></div>
<div class="hl" style="top:1113px"></div>
<div class="rl" style="top:1113px"></div>
<div class="hl" style="top:1148px"></div>
<div class="rl" style="top:1148px"></div>
<div class="hl" style="top:1183px"></div>
<div class="rl" style="top:1183px"></div>
<div class="a" style="left:7px;top:63px;width:40px;height:1px;background:#a0a0a0"></div>
<div class="vl" style="left:47px"></div>
<div class="vl" style="left:107px"></div>
<div class="vl" style="left:1089px"></div>
<div class="vl" style="left:1139px"></div>
<div class="vl" style="left:1189px"></div>
<div class="vl" style="left:1267px"></div>
<div class="vl" style="left:1327px"></div>
<div class="vl" style="left:1427px"></div>
<div class="vl" style="left:1487px"></div>
<span class="t n w" style="left:51px;top:75px;">F0</span>
<span class="t w" style="left:111px;top:75px;letter-spacing:0.019px;">Fahrtrichtungsabhängiger Lichtwechsel weiß/rot ein/aus</span>
<svg class="ic" style="left:1090px;top:64px"><use href="#sun"/></svg>
<span class="t m w" style="left:1143px;top:75px;">3</span>
<div class="cb" style="left:1222px;top:74px"></div>
<div class="cb" style="left:1291px;top:74px"></div>
<div class="co" style="top:64px"><span class="t" style="left:2px;top:10px;letter-spacing:0.100px;">Licht</span><svg class="a" style="left:84.2px;top:7.9px" width="10" height="6"><path d="M0.7 0.7 L4.6 4.4 L8.5 0.7" fill="none" stroke="#333" stroke-width="1.1"/></svg></div>
<svg class="ic" style="left:1428px;top:64px"><use href="#m4light"/></svg>
<span class="t n" style="left:51px;top:110px;">F1</span>
<span class="t" style="left:111px;top:110px;letter-spacing:-0.158px;">Fahrgeräusch ein/aus</span>
<svg class="ic" style="left:1090px;top:99px"><use href="#speaker"/></svg>
<span class="t m" style="left:1143px;top:110px;">6</span>
<div class="cb" style="left:1222px;top:109px"></div>
<div class="cb" style="left:1291px;top:109px"></div>
<div class="co" style="top:99px"><span class="t" style="left:2px;top:10px;letter-spacing:-0.300px;">Sound</span><svg class="a" style="left:84.2px;top:7.9px" width="10" height="6"><path d="M0.7 0.7 L4.6 4.4 L8.5 0.7" fill="none" stroke="#333" stroke-width="1.1"/></svg></div>
<svg class="ic" style="left:1428px;top:99px"><use href="#m4sound"/></svg>
<span class="t n" style="left:51px;top:145px;">F2</span>
<span class="t" style="left:111px;top:145px;letter-spacing:-0.012px;">Signalhorn (hoch)</span>
<svg class="ic" style="left:1090px;top:134px"><use href="#horn"/></svg>
<span class="t m" style="left:1143px;top:145px;">16</span>
<div class="cb" style="left:1222px;top:144px"><svg width="13" height="13"><path d="M2.2 6.3 L5.1 9.4 L10.9 3.5" fill="none" stroke="#2a2a2a" stroke-width="1.3"/></svg></div>
<div class="cb" style="left:1291px;top:144px"></div>
<div class="co" style="top:134px"><span class="t" style="left:2px;top:10px;letter-spacing:-0.300px;">Sound</span><svg class="a" style="left:84.2px;top:7.9px" width="10" height="6"><path d="M0.7 0.7 L4.6 4.4 L8.5 0.7" fill="none" stroke="#333" stroke-width="1.1"/></svg></div>
<svg class="ic" style="left:1428px;top:134px"><use href="#m4horn"/></svg>
<span class="t n" style="left:51px;top:180px;">F3</span>
<span class="t" style="left:111px;top:180px;letter-spacing:0.025px;">Signalhorn (tief)</span>
<svg class="ic" style="left:1090px;top:169px"><use href="#horn"/></svg>
<span class="t m" style="left:1143px;top:180px;">16</span>
<div class="cb" style="left:1222px;top:179px"><svg width="13" height="13"><path d="M2.2 6.3 L5.1 9.4 L10.9 3.5" fill="none" stroke="#2a2a2a" stroke-width="1.3"/></svg></div>
<div class="cb" style="left:1291px;top:179px"></div>
<div class="co" style="top:169px"><span class="t" style="left:2px;top:10px;letter-spacing:-0.300px;">Sound</span><svg class="a" style="left:84.2px;top:7.9px" width="10" height="6"><path d="M0.7 0.7 L4.6 4.4 L8.5 0.7" fill="none" stroke="#333" stroke-width="1.1"/></svg></div>
<svg class="ic" style="left:1428px;top:169px"><use href="#m4horn"/></svg>
<span class="t n" style="left:51px;top:215px;">F4</span>
<span class="t" style="left:111px;top:215px;">k.A.</span>
<svg class="ic" style="left:1090px;top:204px"><use href="#x"/></svg>
<span class="t m" style="left:1143px;top:215px;">1</span>
<div class="cb" style="left:1222px;top:214px"></div>
<div class="cb" style="left:1291px;top:214px"></div>
<div class="co" style="top:204px"><span class="t" style="left:2px;top:10px;letter-spacing:-0.200px;">Physikalisch</span><svg class="a" style="left:84.2px;top:7.9px" width="10" height="6"><path d="M0.7 0.7 L4.6 4.4 L8.5 0.7" fill="none" stroke="#333" stroke-width="1.1"/></svg></div>
<svg class="ic" style="left:1428px;top:204px"><use href="#m4x"/></svg>
<span class="t n" style="left:51px;top:250px;">F5</span>
<span class="t" style="left:111px;top:250px;letter-spacing:-0.008px;">Kupplungsgeräusch Abkuppeln (ein) / Kuppeln (aus)</span>
<svg class="ic" style="left:1090px;top:239px"><use href="#couple"/></svg>
<span class="t m" style="left:1143px;top:250px;">30</span>
<div class="cb" style="left:1222px;top:249px"></div>
<div class="cb" style="left:1291px;top:249px"></div>
<div class="co" style="top:239px"><span class="t" style="left:2px;top:10px;letter-spacing:-0.300px;">Sound</span><svg class="a" style="left:84.2px;top:7.9px" width="10" height="6"><path d="M0.7 0.7 L4.6 4.4 L8.5 0.7" fill="none" stroke="#333" stroke-width="1.1"/></svg></div>
<svg class="ic" style="left:1428px;top:239px"><use href="#m4couple"/></svg>
<span class="t n" style="left:51px;top:285px;">F6</span>
<span class="t" style="left:111px;top:285px;letter-spacing:-0.133px;">Rangiergang ein/aus</span>
<svg class="ic" style="left:1090px;top:274px"><use href="#turtle"/></svg>
<span class="t m" style="left:1143px;top:285px;">9</span>
<div class="cb" style="left:1222px;top:284px"></div>
<div class="cb" style="left:1291px;top:284px"></div>
<div class="co" style="top:274px"><span class="t" style="left:2px;top:10px;letter-spacing:-0.100px;">Logisch</span><svg class="a" style="left:84.2px;top:7.9px" width="10" height="6"><path d="M0.7 0.7 L4.6 4.4 L8.5 0.7" fill="none" stroke="#333" stroke-width="1.1"/></svg></div>
<svg class="ic" style="left:1428px;top:274px"><use href="#m4turtle"/></svg>
<span class="t n" style="left:51px;top:320px;">F7</span>
<span class="t" style="left:111px;top:320px;letter-spacing:-0.054px;">Bremsfunktion H-Bremse (hydrodynamisches Bremsen) ein/aus</span>
<svg class="ic" style="left:1090px;top:309px"><use href="#brake"/></svg>
<span class="t m" style="left:1143px;top:320px;">43</span>
<div class="cb" style="left:1222px;top:319px"></div>
<div class="cb" style="left:1291px;top:319px"></div>
<div class="co" style="top:309px"><span class="t" style="left:2px;top:10px;letter-spacing:-0.300px;">Sound</span><svg class="a" style="left:84.2px;top:7.9px" width="10" height="6"><path d="M0.7 0.7 L4.6 4.4 L8.5 0.7" fill="none" stroke="#333" stroke-width="1.1"/></svg></div>
<svg class="ic" style="left:1428px;top:309px"><use href="#m4sound"/></svg>
<span class="t n" style="left:51px;top:355px;">F8</span>
<span class="t" style="left:111px;top:355px;letter-spacing:-0.005px;">Bremsfunktion #2 (Schnellbremsung) ein/aus</span>
<svg class="ic" style="left:1090px;top:344px"><use href="#brake"/></svg>
<span class="t m" style="left:1143px;top:355px;">43</span>
<div class="cb" style="left:1222px;top:354px"></div>
<div class="cb" style="left:1291px;top:354px"></div>
<div class="co" style="top:344px"><span class="t" style="left:2px;top:10px;letter-spacing:-0.300px;">Sound</span><svg class="a" style="left:84.2px;top:7.9px" width="10" height="6"><path d="M0.7 0.7 L4.6 4.4 L8.5 0.7" fill="none" stroke="#333" stroke-width="1.1"/></svg></div>
<svg class="ic" style="left:1428px;top:344px"><use href="#m4sound"/></svg>
<span class="t n" style="left:51px;top:390px;">F9</span>
<span class="t" style="left:111px;top:390px;letter-spacing:-0.111px;">Lastbetrieb ein/aus</span>
<svg class="ic" style="left:1090px;top:379px"><use href="#mast"/></svg>
<span class="t m" style="left:1143px;top:390px;">76</span>
<div class="cb" style="left:1222px;top:389px"></div>
<div class="cb" style="left:1291px;top:389px"></div>
<div class="co" style="top:379px"><span class="t" style="left:2px;top:10px;letter-spacing:-0.100px;">Logisch</span><svg class="a" style="left:84.2px;top:7.9px" width="10" height="6"><path d="M0.7 0.7 L4.6 4.4 L8.5 0.7" fill="none" stroke="#333" stroke-width="1.1"/></svg></div>
<svg class="ic" style="left:1428px;top:379px"><use href="#m4F"/></svg>
<span class="t n" style="left:51px;top:425px;">F10</span>
<span class="t" style="left:111px;top:425px;letter-spacing:-0.064px;">Leerlaufbetrieb ein/aus</span>
<svg class="ic" style="left:1090px;top:414px"><use href="#gauge"/></svg>
<span class="t m" style="left:1143px;top:425px;">77</span>
<div class="cb" style="left:1222px;top:424px"></div>
<div class="cb" style="left:1291px;top:424px"></div>
<div class="co" style="top:414px"><span class="t" style="left:2px;top:10px;letter-spacing:-0.100px;">Logisch</span><svg class="a" style="left:84.2px;top:7.9px" width="10" height="6"><path d="M0.7 0.7 L4.6 4.4 L8.5 0.7" fill="none" stroke="#333" stroke-width="1.1"/></svg></div>
<svg class="ic" style="left:1428px;top:414px"><use href="#m4F"/></svg>
<span class="t n" style="left:51px;top:460px;">F11</span>
<span class="t" style="left:111px;top:460px;letter-spacing:-0.011px;">Innenbeleuchtung Fahrgastraum ein/aus</span>
<svg class="ic" style="left:1090px;top:449px"><use href="#interior"/></svg>
<span class="t m" style="left:1143px;top:460px;">4</span>
<div class="cb" style="left:1222px;top:459px"></div>
<div class="cb" style="left:1291px;top:459px"></div>
<div class="co" style="top:449px"><span class="t" style="left:2px;top:10px;letter-spacing:0.100px;">Licht</span><svg class="a" style="left:84.2px;top:7.9px" width="10" height="6"><path d="M0.7 0.7 L4.6 4.4 L8.5 0.7" fill="none" stroke="#333" stroke-width="1.1"/></svg></div>
<svg class="ic" style="left:1428px;top:449px"><use href="#m4train"/></svg>
<span class="t n" style="left:51px;top:495px;">F12</span>
<span class="t" style="left:111px;top:495px;letter-spacing:-0.029px;">Innenbeleuchtung Gepäckraum ein/aus</span>
<svg class="ic" style="left:1090px;top:484px"><use href="#interior"/></svg>
<span class="t m" style="left:1143px;top:495px;">4</span>
<div class="cb" style="left:1222px;top:494px"></div>
<div class="cb" style="left:1291px;top:494px"></div>
<div class="co" style="top:484px"><span class="t" style="left:2px;top:10px;letter-spacing:0.100px;">Licht</span><svg class="a" style="left:84.2px;top:7.9px" width="10" height="6"><path d="M0.7 0.7 L4.6 4.4 L8.5 0.7" fill="none" stroke="#333" stroke-width="1.1"/></svg></div>
<svg class="ic" style="left:1428px;top:484px"><use href="#m4train"/></svg>
<span class="t n" style="left:51px;top:530px;">F13</span>
<span class="t" style="left:111px;top:530px;letter-spacing:-0.567px;">Licht aus FS1</span>
<svg class="ic" style="left:1090px;top:519px"><use href="#lampR"/></svg>
<span class="t m" style="left:1143px;top:530px;">79</span>
<div class="cb" style="left:1222px;top:529px"></div>
<div class="cb" style="left:1291px;top:529px"><svg width="13" height="13"><path d="M2.2 6.3 L5.1 9.4 L10.9 3.5" fill="none" stroke="#2a2a2a" stroke-width="1.3"/></svg></div>
<div class="co" style="top:519px"><span class="t" style="left:2px;top:10px;letter-spacing:0.100px;">Licht</span><svg class="a" style="left:84.2px;top:7.9px" width="10" height="6"><path d="M0.7 0.7 L4.6 4.4 L8.5 0.7" fill="none" stroke="#333" stroke-width="1.1"/></svg></div>
<svg class="ic" style="left:1428px;top:519px"><use href="#m4loco1"/></svg>
<span class="t n" style="left:51px;top:565px;">F14</span>
<span class="t" style="left:111px;top:565px;letter-spacing:-0.483px;">Licht aus FS2</span>
<svg class="ic" style="left:1090px;top:554px"><use href="#lampL"/></svg>
<span class="t m" style="left:1143px;top:565px;">78</span>
<div class="cb" style="left:1222px;top:564px"></div>
<div class="cb" style="left:1291px;top:564px"><svg width="13" height="13"><path d="M2.2 6.3 L5.1 9.4 L10.9 3.5" fill="none" stroke="#2a2a2a" stroke-width="1.3"/></svg></div>
<div class="co" style="top:554px"><span class="t" style="left:2px;top:10px;letter-spacing:0.100px;">Licht</span><svg class="a" style="left:84.2px;top:7.9px" width="10" height="6"><path d="M0.7 0.7 L4.6 4.4 L8.5 0.7" fill="none" stroke="#333" stroke-width="1.1"/></svg></div>
<svg class="ic" style="left:1428px;top:554px"><use href="#m4loco2"/></svg>
<span class="t n" style="left:51px;top:600px;">F15</span>
<span class="t" style="left:111px;top:600px;">k.A.</span>
<svg class="ic" style="left:1090px;top:589px"><use href="#x"/></svg>
<span class="t m" style="left:1143px;top:600px;">1</span>
<div class="cb" style="left:1222px;top:599px"></div>
<div class="cb" style="left:1291px;top:599px"></div>
<div class="co" style="top:589px"><span class="t" style="left:2px;top:10px;letter-spacing:-0.200px;">Physikalisch</span><svg class="a" style="left:84.2px;top:7.9px" width="10" height="6"><path d="M0.7 0.7 L4.6 4.4 L8.5 0.7" fill="none" stroke="#333" stroke-width="1.1"/></svg></div>
<svg class="ic" style="left:1428px;top:589px"><use href="#m4x"/></svg>
<span class="t n" style="left:51px;top:635px;">F16</span>
<span class="t" style="left:111px;top:635px;letter-spacing:0.046px;">Schaffnerpfiff</span>
<svg class="ic" style="left:1090px;top:624px"><use href="#whistle"/></svg>
<span class="t m" style="left:1143px;top:635px;">34</span>
<div class="cb" style="left:1222px;top:634px"><svg width="13" height="13"><path d="M2.2 6.3 L5.1 9.4 L10.9 3.5" fill="none" stroke="#2a2a2a" stroke-width="1.3"/></svg></div>
<div class="cb" style="left:1291px;top:634px"></div>
<div class="co" style="top:624px"><span class="t" style="left:2px;top:10px;letter-spacing:-0.300px;">Sound</span><svg class="a" style="left:84.2px;top:7.9px" width="10" height="6"><path d="M0.7 0.7 L4.6 4.4 L8.5 0.7" fill="none" stroke="#333" stroke-width="1.1"/></svg></div>
<svg class="ic" style="left:1428px;top:624px"><use href="#m4whistle"/></svg>
<span class="t n" style="left:51px;top:670px;">F17</span>
<span class="t" style="left:111px;top:670px;letter-spacing:-0.082px;">Bahnhofsdurchsage (Vorsicht am Gleis, Zugdurchfahrt)</span>
<svg class="ic" style="left:1090px;top:659px"><use href="#announce"/></svg>
<span class="t m" style="left:1143px;top:670px;">8</span>
<div class="cb" style="left:1222px;top:669px"><svg width="13" height="13"><path d="M2.2 6.3 L5.1 9.4 L10.9 3.5" fill="none" stroke="#2a2a2a" stroke-width="1.3"/></svg></div>
<div class="cb" style="left:1291px;top:669px"></div>
<div class="co" style="top:659px"><span class="t" style="left:2px;top:10px;letter-spacing:-0.300px;">Sound</span><svg class="a" style="left:84.2px;top:7.9px" width="10" height="6"><path d="M0.7 0.7 L4.6 4.4 L8.5 0.7" fill="none" stroke="#333" stroke-width="1.1"/></svg></div>
<svg class="ic" style="left:1428px;top:659px"><use href="#m4spk"/></svg>
<span class="t n" style="left:51px;top:705px;">F18</span>
<span class="t" style="left:111px;top:705px;letter-spacing:-0.116px;">Bahnhofsdurchsage (Bitte einsteigen, Türen schliessen, Abfahrt)</span>
<svg class="ic" style="left:1090px;top:694px"><use href="#announce"/></svg>
<span class="t m" style="left:1143px;top:705px;">8</span>
<div class="cb" style="left:1222px;top:704px"><svg width="13" height="13"><path d="M2.2 6.3 L5.1 9.4 L10.9 3.5" fill="none" stroke="#2a2a2a" stroke-width="1.3"/></svg></div>
<div class="cb" style="left:1291px;top:704px"></div>
<div class="co" style="top:694px"><span class="t" style="left:2px;top:10px;letter-spacing:-0.300px;">Sound</span><svg class="a" style="left:84.2px;top:7.9px" width="10" height="6"><path d="M0.7 0.7 L4.6 4.4 L8.5 0.7" fill="none" stroke="#333" stroke-width="1.1"/></svg></div>
<svg class="ic" style="left:1428px;top:694px"><use href="#m4spk"/></svg>
<span class="t n" style="left:51px;top:740px;">F19</span>
<span class="t" style="left:111px;top:740px;letter-spacing:-0.175px;">Bahnhofsdurchsage (Einsteigen, Türen schliessen, Vorsicht an der Bahnsteigkante)</span>
<svg class="ic" style="left:1090px;top:729px"><use href="#announce"/></svg>
<span class="t m" style="left:1143px;top:740px;">8</span>
<div class="cb" style="left:1222px;top:739px"><svg width="13" height="13"><path d="M2.2 6.3 L5.1 9.4 L10.9 3.5" fill="none" stroke="#2a2a2a" stroke-width="1.3"/></svg></div>
<div class="cb" style="left:1291px;top:739px"></div>
<div class="co" style="top:729px"><span class="t" style="left:2px;top:10px;letter-spacing:-0.300px;">Sound</span><svg class="a" style="left:84.2px;top:7.9px" width="10" height="6"><path d="M0.7 0.7 L4.6 4.4 L8.5 0.7" fill="none" stroke="#333" stroke-width="1.1"/></svg></div>
<svg class="ic" style="left:1428px;top:729px"><use href="#m4spk"/></svg>
<span class="t n" style="left:51px;top:775px;">F20</span>
<span class="t" style="left:111px;top:775px;letter-spacing:-0.056px;">Bahnhofsdurchsage (Vorsicht, Zugabfahrt)</span>
<svg class="ic" style="left:1090px;top:764px"><use href="#announce"/></svg>
<span class="t m" style="left:1143px;top:775px;">8</span>
<div class="cb" style="left:1222px;top:774px"><svg width="13" height="13"><path d="M2.2 6.3 L5.1 9.4 L10.9 3.5" fill="none" stroke="#2a2a2a" stroke-width="1.3"/></svg></div>
<div class="cb" style="left:1291px;top:774px"></div>
<div class="co" style="top:764px"><span class="t" style="left:2px;top:10px;letter-spacing:-0.300px;">Sound</span><svg class="a" style="left:84.2px;top:7.9px" width="10" height="6"><path d="M0.7 0.7 L4.6 4.4 L8.5 0.7" fill="none" stroke="#333" stroke-width="1.1"/></svg></div>
<svg class="ic" style="left:1428px;top:764px"><use href="#m4spk"/></svg>
<span class="t n" style="left:51px;top:810px;">F21</span>
<span class="t" style="left:111px;top:810px;letter-spacing:-0.072px;">Lokbremse anlegen/lösen (automatisch) Geräusch aus/ein</span>
<svg class="ic" style="left:1090px;top:799px"><use href="#brake2"/></svg>
<span class="t m" style="left:1143px;top:810px;">59</span>
<div class="cb" style="left:1222px;top:809px"></div>
<div class="cb" style="left:1291px;top:809px"><svg width="13" height="13"><path d="M2.2 6.3 L5.1 9.4 L10.9 3.5" fill="none" stroke="#2a2a2a" stroke-width="1.3"/></svg></div>
<div class="co" style="top:799px"><span class="t" style="left:2px;top:10px;letter-spacing:-0.300px;">Sound</span><svg class="a" style="left:84.2px;top:7.9px" width="10" height="6"><path d="M0.7 0.7 L4.6 4.4 L8.5 0.7" fill="none" stroke="#333" stroke-width="1.1"/></svg></div>
<svg class="ic" style="left:1428px;top:799px"><use href="#m4sound"/></svg>
<span class="t n" style="left:51px;top:845px;">F22</span>
<span class="t" style="left:111px;top:845px;letter-spacing:-0.073px;">Führerstandstüre auf/zu</span>
<svg class="ic" style="left:1090px;top:834px"><use href="#door"/></svg>
<span class="t m" style="left:1143px;top:845px;">18</span>
<div class="cb" style="left:1222px;top:844px"><svg width="13" height="13"><path d="M2.2 6.3 L5.1 9.4 L10.9 3.5" fill="none" stroke="#2a2a2a" stroke-width="1.3"/></svg></div>
<div class="cb" style="left:1291px;top:844px"></div>
<div class="co" style="top:834px"><span class="t" style="left:2px;top:10px;letter-spacing:-0.300px;">Sound</span><svg class="a" style="left:84.2px;top:7.9px" width="10" height="6"><path d="M0.7 0.7 L4.6 4.4 L8.5 0.7" fill="none" stroke="#333" stroke-width="1.1"/></svg></div>
<svg class="ic" style="left:1428px;top:834px"><use href="#m4door"/></svg>
<span class="t n" style="left:51px;top:880px;">F23</span>
<span class="t" style="left:111px;top:880px;letter-spacing:-0.094px;">Bahnhofsdurchsage (Einfahrt Eilzug nach Stuttgart)</span>
<svg class="ic" style="left:1090px;top:869px"><use href="#announce"/></svg>
<span class="t m" style="left:1143px;top:880px;">8</span>
<div class="cb" style="left:1222px;top:879px"><svg width="13" height="13"><path d="M2.2 6.3 L5.1 9.4 L10.9 3.5" fill="none" stroke="#2a2a2a" stroke-width="1.3"/></svg></div>
<div class="cb" style="left:1291px;top:879px"></div>
<div class="co" style="top:869px"><span class="t" style="left:2px;top:10px;letter-spacing:-0.300px;">Sound</span><svg class="a" style="left:84.2px;top:7.9px" width="10" height="6"><path d="M0.7 0.7 L4.6 4.4 L8.5 0.7" fill="none" stroke="#333" stroke-width="1.1"/></svg></div>
<svg class="ic" style="left:1428px;top:869px"><use href="#m4spk"/></svg>
<span class="t n" style="left:51px;top:915px;">F24</span>
<span class="t" style="left:111px;top:915px;letter-spacing:-0.039px;">Soundfader (Tunnelmodus) ein/aus</span>
<svg class="ic" style="left:1090px;top:904px"><use href="#fader"/></svg>
<span class="t m" style="left:1143px;top:915px;">101</span>
<div class="cb" style="left:1222px;top:914px"></div>
<div class="cb" style="left:1291px;top:914px"></div>
<div class="co" style="top:904px"><span class="t" style="left:2px;top:10px;letter-spacing:-0.100px;">Logisch</span><svg class="a" style="left:84.2px;top:7.9px" width="10" height="6"><path d="M0.7 0.7 L4.6 4.4 L8.5 0.7" fill="none" stroke="#333" stroke-width="1.1"/></svg></div>
<svg class="ic" style="left:1428px;top:904px"><use href="#m4mute"/></svg>
<span class="t n" style="left:51px;top:950px;">F25</span>
<span class="t" style="left:111px;top:950px;letter-spacing:-0.100px;">Bremsgeräusch/Bremsenquietschen aus/ein</span>
<svg class="ic" style="left:1090px;top:939px"><use href="#brakesq"/></svg>
<span class="t m" style="left:1143px;top:950px;">23</span>
<div class="cb" style="left:1222px;top:949px"></div>
<div class="cb" style="left:1291px;top:949px"><svg width="13" height="13"><path d="M2.2 6.3 L5.1 9.4 L10.9 3.5" fill="none" stroke="#2a2a2a" stroke-width="1.3"/></svg></div>
<div class="co" style="top:939px"><span class="t" style="left:2px;top:10px;letter-spacing:-0.300px;">Sound</span><svg class="a" style="left:84.2px;top:7.9px" width="10" height="6"><path d="M0.7 0.7 L4.6 4.4 L8.5 0.7" fill="none" stroke="#333" stroke-width="1.1"/></svg></div>
<svg class="ic" style="left:1428px;top:939px"><use href="#m4brakesq"/></svg>
<span class="t n" style="left:51px;top:985px;">F26</span>
<span class="t" style="left:111px;top:985px;letter-spacing:-0.012px;">Kurvengeräusch/-quietschen ein/aus</span>
<svg class="ic" style="left:1090px;top:974px"><use href="#curve"/></svg>
<span class="t m" style="left:1143px;top:985px;">38</span>
<div class="cb" style="left:1222px;top:984px"></div>
<div class="cb" style="left:1291px;top:984px"></div>
<div class="co" style="top:974px"><span class="t" style="left:2px;top:10px;letter-spacing:-0.300px;">Sound</span><svg class="a" style="left:84.2px;top:7.9px" width="10" height="6"><path d="M0.7 0.7 L4.6 4.4 L8.5 0.7" fill="none" stroke="#333" stroke-width="1.1"/></svg></div>
<svg class="ic" style="left:1428px;top:974px"><use href="#m4sound"/></svg>
<span class="t n" style="left:51px;top:1020px;">F27</span>
<span class="t" style="left:111px;top:1020px;letter-spacing:-0.153px;">Kompressor ein/aus</span>
<svg class="ic" style="left:1090px;top:1009px"><use href="#compressor"/></svg>
<span class="t m" style="left:1143px;top:1020px;">44</span>
<div class="cb" style="left:1222px;top:1019px"></div>
<div class="cb" style="left:1291px;top:1019px"></div>
<div class="co" style="top:1009px"><span class="t" style="left:2px;top:10px;letter-spacing:-0.300px;">Sound</span><svg class="a" style="left:84.2px;top:7.9px" width="10" height="6"><path d="M0.7 0.7 L4.6 4.4 L8.5 0.7" fill="none" stroke="#333" stroke-width="1.1"/></svg></div>
<svg class="ic" style="left:1428px;top:1009px"><use href="#m4compressor"/></svg>
<span class="t n" style="left:51px;top:1055px;">F28</span>
<span class="t" style="left:111px;top:1055px;letter-spacing:-0.148px;">Rangierfunk (Rangierabstand)</span>
<svg class="ic" style="left:1090px;top:1044px"><use href="#radio"/></svg>
<span class="t m" style="left:1143px;top:1055px;">29</span>
<div class="cb" style="left:1222px;top:1054px"><svg width="13" height="13"><path d="M2.2 6.3 L5.1 9.4 L10.9 3.5" fill="none" stroke="#2a2a2a" stroke-width="1.3"/></svg></div>
<div class="cb" style="left:1291px;top:1054px"></div>
<div class="co" style="top:1044px"><span class="t" style="left:2px;top:10px;letter-spacing:-0.300px;">Sound</span><svg class="a" style="left:84.2px;top:7.9px" width="10" height="6"><path d="M0.7 0.7 L4.6 4.4 L8.5 0.7" fill="none" stroke="#333" stroke-width="1.1"/></svg></div>
<svg class="ic" style="left:1428px;top:1044px"><use href="#m4radio"/></svg>
<span class="t n" style="left:51px;top:1090px;">F29</span>
<span class="t" style="left:111px;top:1090px;letter-spacing:-0.329px;">Pressluft ablassen</span>
<svg class="ic" style="left:1090px;top:1079px"><use href="#air"/></svg>
<span class="t m" style="left:1143px;top:1090px;">45</span>
<div class="cb" style="left:1222px;top:1089px"><svg width="13" height="13"><path d="M2.2 6.3 L5.1 9.4 L10.9 3.5" fill="none" stroke="#2a2a2a" stroke-width="1.3"/></svg></div>
<div class="cb" style="left:1291px;top:1089px"></div>
<div class="co" style="top:1079px"><span class="t" style="left:2px;top:10px;letter-spacing:-0.300px;">Sound</span><svg class="a" style="left:84.2px;top:7.9px" width="10" height="6"><path d="M0.7 0.7 L4.6 4.4 L8.5 0.7" fill="none" stroke="#333" stroke-width="1.1"/></svg></div>
<svg class="ic" style="left:1428px;top:1079px"><use href="#m4sound"/></svg>
<span class="t n" style="left:51px;top:1125px;">F30</span>
<span class="t" style="left:111px;top:1125px;letter-spacing:-0.076px;">Zugheizung Dampfkessel ein/aus</span>
<svg class="ic" style="left:1090px;top:1114px"><use href="#heat"/></svg>
<span class="t m" style="left:1143px;top:1125px;">68</span>
<div class="cb" style="left:1222px;top:1124px"></div>
<div class="cb" style="left:1291px;top:1124px"></div>
<div class="co" style="top:1114px"><span class="t" style="left:2px;top:10px;letter-spacing:-0.300px;">Sound</span><svg class="a" style="left:84.2px;top:7.9px" width="10" height="6"><path d="M0.7 0.7 L4.6 4.4 L8.5 0.7" fill="none" stroke="#333" stroke-width="1.1"/></svg></div>
<svg class="ic" style="left:1428px;top:1114px"><use href="#m4heat"/></svg>
<span class="t n" style="left:51px;top:1160px;">F31</span>
<span class="t" style="left:111px;top:1160px;letter-spacing:0.018px;">Weichengeräusch/-quietschen ein/aus</span>
<svg class="ic" style="left:1090px;top:1149px"><use href="#switch"/></svg>
<span class="t m" style="left:1143px;top:1160px;">39</span>
<div class="cb" style="left:1222px;top:1159px"></div>
<div class="cb" style="left:1291px;top:1159px"></div>
<div class="co" style="top:1149px"><span class="t" style="left:2px;top:10px;letter-spacing:-0.300px;">Sound</span><svg class="a" style="left:84.2px;top:7.9px" width="10" height="6"><path d="M0.7 0.7 L4.6 4.4 L8.5 0.7" fill="none" stroke="#333" stroke-width="1.1"/></svg></div>
<svg class="ic" style="left:1428px;top:1149px"><use href="#m4sound"/></svg>
</body></html>
